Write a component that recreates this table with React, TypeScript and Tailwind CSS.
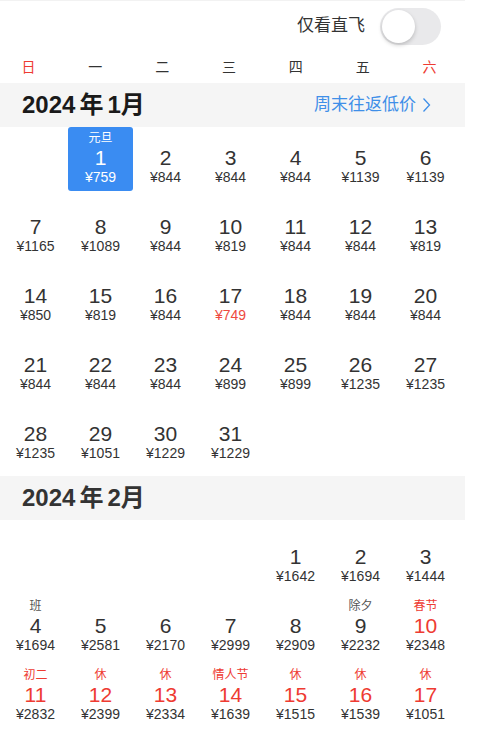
type Day = {
  d: number;
  price: number;
  label?: string;
  labelRed?: boolean;
  red?: boolean;
  priceRed?: boolean;
  selected?: boolean;
};

const jan: (Day | null)[] = [
  null,
  { d: 1, price: 759, label: "元旦", selected: true },
  { d: 2, price: 844 },
  { d: 3, price: 844 },
  { d: 4, price: 844 },
  { d: 5, price: 1139 },
  { d: 6, price: 1139 },
  { d: 7, price: 1165 },
  { d: 8, price: 1089 },
  { d: 9, price: 844 },
  { d: 10, price: 819 },
  { d: 11, price: 844 },
  { d: 12, price: 844 },
  { d: 13, price: 819 },
  { d: 14, price: 850 },
  { d: 15, price: 819 },
  { d: 16, price: 844 },
  { d: 17, price: 749, priceRed: true },
  { d: 18, price: 844 },
  { d: 19, price: 844 },
  { d: 20, price: 844 },
  { d: 21, price: 844 },
  { d: 22, price: 844 },
  { d: 23, price: 844 },
  { d: 24, price: 899 },
  { d: 25, price: 899 },
  { d: 26, price: 1235 },
  { d: 27, price: 1235 },
  { d: 28, price: 1235 },
  { d: 29, price: 1051 },
  { d: 30, price: 1229 },
  { d: 31, price: 1229 },
];

const feb: (Day | null)[] = [
  null,
  null,
  null,
  null,
  { d: 1, price: 1642 },
  { d: 2, price: 1694 },
  { d: 3, price: 1444 },
  { d: 4, price: 1694, label: "班" },
  { d: 5, price: 2581 },
  { d: 6, price: 2170 },
  { d: 7, price: 2999 },
  { d: 8, price: 2909 },
  { d: 9, price: 2232, label: "除夕" },
  { d: 10, price: 2348, label: "春节", labelRed: true, red: true },
  { d: 11, price: 2832, label: "初二", labelRed: true, red: true },
  { d: 12, price: 2399, label: "休", labelRed: true, red: true },
  { d: 13, price: 2334, label: "休", labelRed: true, red: true },
  { d: 14, price: 1639, label: "情人节", labelRed: true, red: true },
  { d: 15, price: 1515, label: "休", labelRed: true, red: true },
  { d: 16, price: 1539, label: "休", labelRed: true, red: true },
  { d: 17, price: 1051, label: "休", labelRed: true, red: true },
];

const weekdays = ["日", "一", "二", "三", "四", "五", "六"];

function Cell({ day }: { day: Day | null }) {
  if (!day) return <div className="h-16" />;
  const sel = day.selected;
  return (
    <div
      className={`h-16 flex flex-col items-center pt-[4px] rounded-[3px] ${
        sel ? "bg-[#3a8cf2] text-white" : "text-[#333]"
      }`}
    >
      <div
        className={`h-[15px] text-[12px] leading-[15px] ${
          sel ? "text-white" : day.labelRed ? "text-[#ee3b32]" : "text-[#555]"
        }`}
      >
        {day.label ?? ""}
      </div>
      <div
        className={`text-[21px] leading-[23px] ${
          sel ? "text-white" : day.red ? "text-[#ee3b32]" : "text-[#333]"
        }`}
      >
        {day.d}
      </div>
      <div
        className={`text-[14px] leading-4 ${
          sel ? "text-white" : day.priceRed ? "text-[#ee4a3e]" : "text-[#333]"
        }`}
      >
        ¥{day.price}
      </div>
    </div>
  );
}

function MonthGrid({ days, top }: { days: (Day | null)[]; top: string }) {
  return (
    <div className={`grid grid-cols-[repeat(7,65px)] gap-y-[5px] ml-[3px] ${top}`}>
      {days.map((day, i) => (
        <Cell key={i} day={day} />
      ))}
    </div>
  );
}

function MonthTitle({ m, bold }: { m: number; bold?: boolean }) {
  return (
    <span
      className={`flex items-center text-[24px] ${
        bold ? "font-bold text-[#1a1a1a]" : "font-semibold text-[#333]"
      }`}
    >
      2024<span className="mx-[4px]">年</span>
      {m}月
    </span>
  );
}

export default function App() {
  return (
    <div
      className="w-[487px] h-[732px] overflow-hidden bg-white text-[#333]"
      style={{ fontFamily: '"Liberation Sans", "Noto Sans CJK SC", sans-serif' }}
    >
      <div className="w-[465px] border-t border-[#f2f2f2]">
        {/* direct flights toggle */}
        <div className="h-[50px] flex items-center justify-end gap-[15px] pr-[24px]">
          <span className="text-[17px] text-[#333]">仅看直飞</span>
          <div className="w-[61px] h-[37px] rounded-full bg-[#e9e9eb] p-[2px] flex items-center">
            <div className="w-[33px] h-[33px] rounded-full bg-white shadow-[0_2px_4px_rgba(0,0,0,0.2)]" />
          </div>
        </div>

        {/* weekdays */}
        <div className="grid grid-cols-7 w-[468px] -ml-[5px] h-[32px] items-center text-[14px]">
          {weekdays.map((w, i) => (
            <div
              key={w}
              className={`text-center ${i === 0 || i === 6 ? "text-[#ee3b32]" : "text-[#333]"}`}
            >
              {w}
            </div>
          ))}
        </div>

        {/* January */}
        <div className="h-[44px] bg-[#f5f5f5] flex items-center justify-between pl-[22px] pr-[34px]">
          <MonthTitle m={1} bold />
          <span className="flex items-center gap-[6px] text-[17px] text-[#3f8fe8]">
            周末往返低价
            <svg width="9" height="16" viewBox="0 0 9 16" fill="none">
              <polyline points="1.5,1.5 7.5,8 1.5,14.5" stroke="#3f8fe8" strokeWidth="1.3" />
            </svg>
          </span>
        </div>
        <MonthGrid days={jan} top="pt-0 pb-[9px]" />

        {/* February */}
        <div className="h-[44px] bg-[#f5f5f5] flex items-center pl-[22px]">
          <MonthTitle m={2} />
        </div>
        <MonthGrid days={feb} top="pt-[6px]" />
      </div>
      <div className="mt-[4px] h-px bg-[#dcdcdc]" />
    </div>
  );
}
